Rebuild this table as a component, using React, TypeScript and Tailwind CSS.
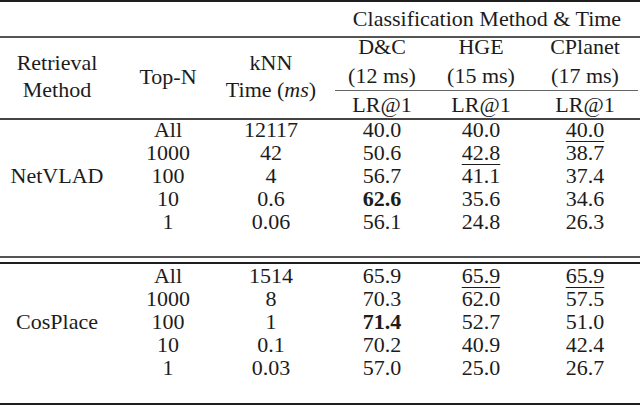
import React from "react";

type Cell = { v: string; b?: boolean; u?: boolean };

const block1: { m: string; n: string; t: string; c: Cell[] }[] = [
  { m: "", n: "All", t: "12117", c: [{ v: "40.0" }, { v: "40.0" }, { v: "40.0", u: true }] },
  { m: "", n: "1000", t: "42", c: [{ v: "50.6" }, { v: "42.8", u: true }, { v: "38.7" }] },
  { m: "NetVLAD", n: "100", t: "4", c: [{ v: "56.7" }, { v: "41.1" }, { v: "37.4" }] },
  { m: "", n: "10", t: "0.6", c: [{ v: "62.6", b: true }, { v: "35.6" }, { v: "34.6" }] },
  { m: "", n: "1", t: "0.06", c: [{ v: "56.1" }, { v: "24.8" }, { v: "26.3" }] },
];

const block2: { m: string; n: string; t: string; c: Cell[] }[] = [
  { m: "", n: "All", t: "1514", c: [{ v: "65.9" }, { v: "65.9", u: true }, { v: "65.9", u: true }] },
  { m: "", n: "1000", t: "8", c: [{ v: "70.3" }, { v: "62.0" }, { v: "57.5" }] },
  { m: "CosPlace", n: "100", t: "1", c: [{ v: "71.4", b: true }, { v: "52.7" }, { v: "51.0" }] },
  { m: "", n: "10", t: "0.1", c: [{ v: "70.2" }, { v: "40.9" }, { v: "42.4" }] },
  { m: "", n: "1", t: "0.03", c: [{ v: "57.0" }, { v: "25.0" }, { v: "26.7" }] },
];

const cols = "grid grid-cols-[114px_108px_110px_100px_98px_110px]";

function Val({ c }: { c: Cell }) {
  return (
    <span
      className={
        (c.b ? "font-bold " : "") +
        (c.u ? "underline underline-offset-[4px] decoration-1 " : "")
      }
    >
      {c.v}
    </span>
  );
}

function Rows({ rows }: { rows: typeof block1 }) {
  return (
    <>
      {rows.map((r, i) => (
        <div key={i} className={cols + " h-[23px] items-center text-center"}>
          <div className="whitespace-nowrap">{r.m}</div>
          <div>{r.n}</div>
          <div className="pr-[12px]">{r.t}</div>
          {r.c.map((c, j) => (
            <div key={j}>
              <Val c={c} />
            </div>
          ))}
        </div>
      ))}
    </>
  );
}

export default function App() {
  return (
    <div
      className="w-[640px] h-[407px] bg-white text-[#1c1c1c] text-[22px] leading-[23px] overflow-hidden"
      style={{ fontFamily: '"Liberation Serif", "Times New Roman", serif' }}
    >
      {/* top rule */}
      <div className="h-[2px] bg-[#1e1e1e]" />
      {/* Classification header */}
      <div className={cols + " h-[34px] items-center"}>
        <div />
        <div />
        <div />
        <div className="col-span-3 text-center leading-[34px] pl-[2px] pb-[2px]">
          Classification Method &amp; Time
        </div>
      </div>
      <div className="h-[2px] bg-[#555]" />
      {/* header block */}
      <div className={cols + " h-[80px]"}>
        <div className="flex flex-col items-center justify-center leading-[27px] pb-[4px]">
          <div>Retrieval</div>
          <div>Method</div>
        </div>
        <div className="flex items-center justify-center pb-[4px]">Top-N</div>
        <div className="flex flex-col items-center justify-center leading-[27px] pb-[4px] pr-[12px]">
          <div>kNN</div>
          <div>
            Time (<i>ms</i>)
          </div>
        </div>
        <div className="col-span-3 flex flex-col">
          <div className="grid grid-cols-[100px_98px_110px] h-[18px] leading-[18px] text-center">
            <div>D&amp;C</div>
            <div>HGE</div>
            <div>CPlanet</div>
          </div>
          <div className="grid grid-cols-[100px_98px_110px] h-[34px] pt-[6px] leading-[28px] text-center">
            <div>(12 ms)</div>
            <div>(15 ms)</div>
            <div>(17 ms)</div>
          </div>
          <div className="h-[1px] bg-[#666] ml-[3px] mr-[2px]" />
          <div className="grid grid-cols-[100px_98px_110px] h-[27px] leading-[27px] text-center">
            <div>LR@1</div>
            <div>LR@1</div>
            <div>LR@1</div>
          </div>
        </div>
      </div>
      <div className="h-[2px] bg-[#444]" />
      {/* block 1 */}
      <div className="h-[136px] flex flex-col">
        <div className="-mt-[2.5px]">
          <Rows rows={block1} />
        </div>
      </div>
      {/* double rule */}
      <div className="h-[2px] bg-[#555]" />
      <div className="h-[4px]" />
      <div className="h-[2px] bg-[#1e1e1e]" />
      {/* block 2 */}
      <div className="h-[139px] flex flex-col">
        <div className="-mt-[0.5px]">
          <Rows rows={block2} />
        </div>
      </div>
      <div className="h-[2px] bg-[#1e1e1e]" />
    </div>
  );
}
